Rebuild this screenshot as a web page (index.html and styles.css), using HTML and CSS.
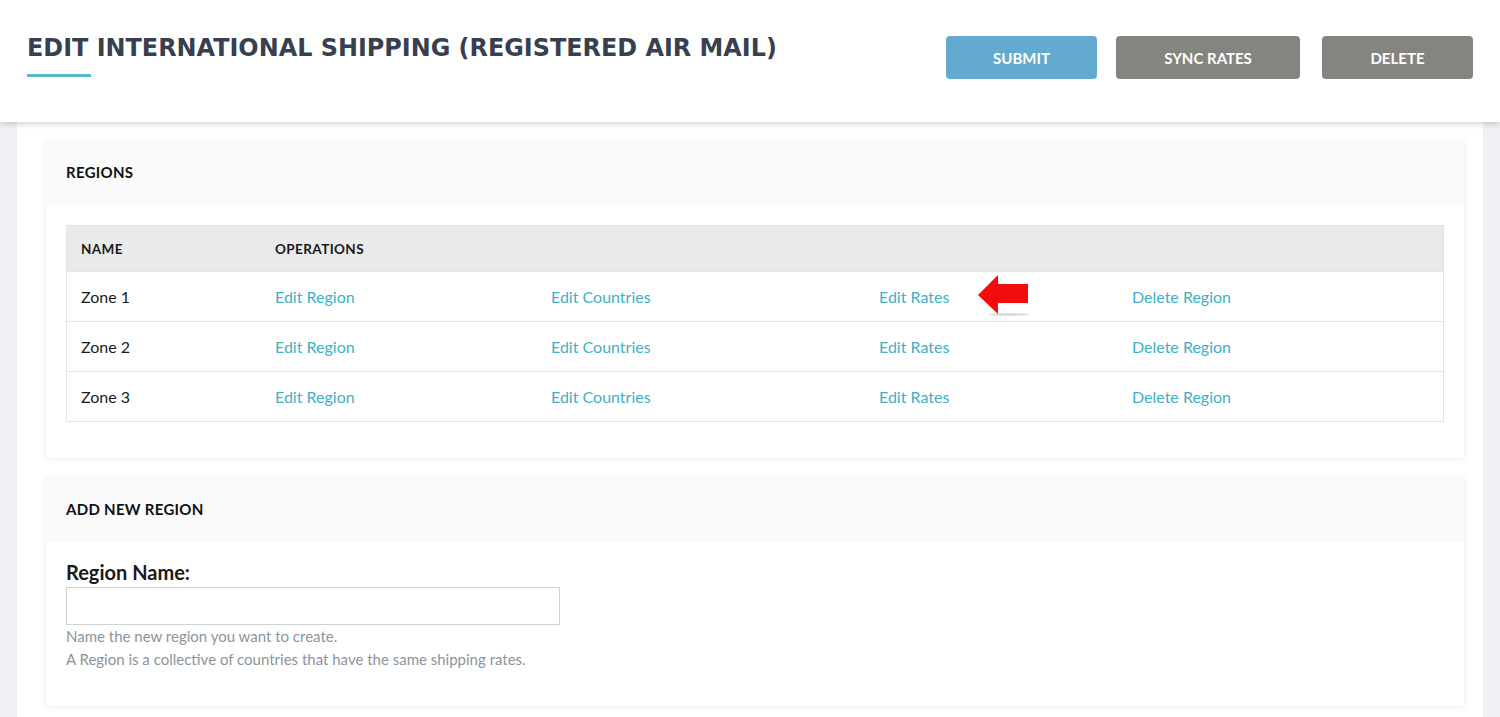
FILE: index.html
```html
<!DOCTYPE html>
<html lang="en">

<head>
    <meta charset="UTF-8">
    <meta name="viewport" content="width=device-width, initial-scale=1.0">
    <title>Edit International Shipping</title>
    <link rel="stylesheet" href="styles.css">
</head>

<body>
    <header class="page-header">
        <div class="title-block">
            <h1 class="page-title">Edit International Shipping (Registered Air Mail)</h1>
            <span class="title-line"></span>
        </div>
        <div class="actions">
            <button class="btn btn-primary">Submit</button>
            <button class="btn btn-grey btn-sync">Sync Rates</button>
            <button class="btn btn-grey">Delete</button>
        </div>
    </header>

    <main class="content">
        <section class="card">
            <div class="card-head">Regions</div>
            <div class="card-body">
                <div class="regions">
                    <div class="row head">
                        <div class="cell">Name</div>
                        <div class="cell wide">Operations</div>
                    </div>
                    <div class="row">
                        <div class="cell">Zone 1</div>
                        <div class="cell"><a href="#">Edit Region</a></div>
                        <div class="cell"><a href="#">Edit Countries</a></div>
                        <div class="cell pointed">
                            <a href="#">Edit Rates</a>
                            <!-- red marker pointing at the link -->
                            <svg class="arrow" width="56" height="46" viewBox="0 0 56 46">
                                <ellipse cx="32" cy="40.5" rx="20" ry="1.4" fill="#000" opacity="0.14"/>
                                <path d="M1 21 L21 1 L21 10 L51 10 L51 29 L21 29 L21 40 Z" fill="#f20d0d"/>
                            </svg>
                        </div>
                        <div class="cell"><a href="#">Delete Region</a></div>
                    </div>
                    <div class="row">
                        <div class="cell">Zone 2</div>
                        <div class="cell"><a href="#">Edit Region</a></div>
                        <div class="cell"><a href="#">Edit Countries</a></div>
                        <div class="cell"><a href="#">Edit Rates</a></div>
                        <div class="cell"><a href="#">Delete Region</a></div>
                    </div>
                    <div class="row">
                        <div class="cell">Zone 3</div>
                        <div class="cell"><a href="#">Edit Region</a></div>
                        <div class="cell"><a href="#">Edit Countries</a></div>
                        <div class="cell"><a href="#">Edit Rates</a></div>
                        <div class="cell"><a href="#">Delete Region</a></div>
                    </div>
                </div>
            </div>
        </section>

        <section class="card">
            <div class="card-head">Add New Region</div>
            <div class="card-body form-body">
                <label for="region" class="field-label">Region Name:</label>
                <input type="text" id="region" class="field-input">
                <p class="help">Name the new region you want to create.</p>
                <p class="help">A Region is a collective of countries that have the same shipping rates.</p>
            </div>
        </section>
    </main>
</body>
</html>
```

FILE: styles.css
```css
body {
    margin: 0;
    background-color: #eff1f5;
    font-family: Lato, "Open Sans", sans-serif;
    color: #1a1a1a;
}

.page-header {
    position: relative;
    z-index: 2;
    height: 122px;
    background-color: #fff;
    box-shadow: 0 2px 6px rgba(0, 0, 0, 0.18);
    display: flex;
    justify-content: space-between;
    align-items: flex-start;
    padding: 0 27px 0 27px;
}

.title-block {
    padding-top: 34px;
}

.page-title {
    margin: 0;
    font-family: "DejaVu Sans", sans-serif;
    font-weight: bold;
    font-size: 23.9px;
    line-height: 29px;
    text-transform: uppercase;
    color: #383f50;
}

.title-line {
    display: block;
    width: 64px;
    height: 3px;
    margin-top: 11px;
    background-color: #58b7c9;
}

.actions {
    display: flex;
    gap: 19px;
    padding-top: 36px;
}

.btn {
    width: 151px;
    height: 43px;
    border: none;
    border-radius: 4px;
    color: #fff;
    font-family: Lato, sans-serif;
    font-weight: bold;
    font-size: 15px;
    text-transform: uppercase;
}

.btn-primary {
    background-color: #63aad1;
}

.btn-grey {
    background-color: #858580;
}

.btn-sync {
    width: 184px;
    margin-right: 3px;
}

.content {
    margin: 0 17px 0 17px;
    background-color: #fff;
    padding: 18px 19px 10px 29px;
    min-height: 600px;
}

.card {
    background-color: #fff;
    box-shadow: 0 1px 6px rgba(0, 0, 0, 0.08);
    margin-bottom: 19px;
}

.card-head {
    height: 65px;
    line-height: 65px;
    padding-left: 20px;
    background-color: #fafafa;
    font-weight: bold;
    font-size: 15px;
    text-transform: uppercase;
    letter-spacing: 0.3px;
    color: #111;
}

.card-body {
    padding: 20px 20px 36px 20px;
}

.regions {
    border: 1px solid #e3e3e3;
}

.row {
    display: grid;
    grid-template-columns: 194px 276px 328px 253px 1fr;
    height: 49px;
    align-items: center;
    border-top: 1px solid #e3e3e3;
    font-size: 16px;
}

.row.head {
    border-top: none;
    height: 45px;
    background-color: #e9eaec;
    font-weight: bold;
    font-size: 13.5px;
    text-transform: uppercase;
    letter-spacing: 0.4px;
}

.cell {
    padding-left: 14px;
}

.cell.wide {
    grid-column: span 4;
}

.row a {
    color: #3fb0c6;
    text-decoration: none;
}

.pointed {
    position: relative;
}

.arrow {
    position: absolute;
    left: 112px;
    top: -13px;
}

.form-body {
    padding: 18px 20px 35px 20px;
}

.field-label {
    display: block;
    font-weight: bold;
    font-size: 20px;
    line-height: 24px;
    margin-bottom: 3px;
}

.field-input {
    display: block;
    box-sizing: border-box;
    width: 494px;
    height: 38px;
    border: 1px solid #cfd2d6;
    margin: 0;
}

.help {
    margin: 0;
    font-size: 15px;
    line-height: 23px;
    color: #8d949e;
}
```
